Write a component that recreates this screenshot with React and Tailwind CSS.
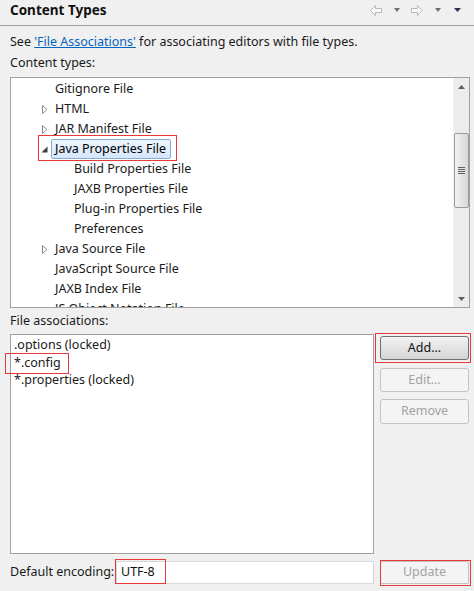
import React from "react";

const font = { fontFamily: '"Noto Sans", "Noto Sans CJK SC", sans-serif' };

function Collapsed() {
  return (
    <svg width="6" height="9" viewBox="0 0 6 9" className="block">
      <path d="M0.5 0.5 L5 4.5 L0.5 8.5 Z" fill="none" stroke="#8c8c8c" strokeWidth="1" />
    </svg>
  );
}

function Expanded() {
  return (
    <svg width="7" height="7" viewBox="0 0 7 7" className="block">
      <path d="M6.5 0.5 L6.5 6.5 L0.5 6.5 Z" fill="#3c3c3c" />
    </svg>
  );
}

function TreeRow({ level, state, children, selected }) {
  return (
    <div className="h-[20px] flex items-center whitespace-nowrap">
      <div className={level === 0 ? "w-[31px] shrink-0" : "w-[50px] shrink-0"} />
      <div className="w-[10px] shrink-0 flex items-center">
        {state === "c" && <Collapsed />}
        {state === "e" && <div className="-ml-[1px]"><Expanded /></div>}
      </div>
      {selected ? (
        <div className="ml-[-1px] h-[20px] pl-[3px] pr-[4px] flex items-center rounded-[2px] border border-[#84acdd] bg-gradient-to-b from-[#eef5fd] to-[#d5e7fb] text-[#000]">
          {children}
        </div>
      ) : (
        <div className="ml-[3px] text-[#1a1a1a]">{children}</div>
      )}
    </div>
  );
}

function BackArrow() {
  return (
    <svg width="12" height="11" viewBox="0 0 12 11" className="block">
      <path d="M0.5 5.5 L5.5 0.5 L5.5 3.5 L11.5 3.5 L11.5 7.5 L5.5 7.5 L5.5 10.5 Z" fill="#fafafa" stroke="#b8b8b8" strokeWidth="1" />
    </svg>
  );
}
function FwdArrow() {
  return (
    <svg width="12" height="11" viewBox="0 0 12 11" className="block">
      <path d="M11.5 5.5 L6.5 0.5 L6.5 3.5 L0.5 3.5 L0.5 7.5 L6.5 7.5 L6.5 10.5 Z" fill="#fafafa" stroke="#b8b8b8" strokeWidth="1" />
    </svg>
  );
}
function SmallDown({ color, w = 6 }) {
  return (
    <svg width={w} height="4" viewBox={`0 0 ${w} 4`} className="block">
      <path d={`M0 0 L${w} 0 L${w / 2} 4 Z`} fill={color} />
    </svg>
  );
}

export default function App() {
  return (
    <div className="relative w-[474px] h-[591px] bg-[#f0f0f0] text-[12.5px] text-[#1a1a1a] overflow-hidden" style={font}>
      {/* Header */}
      <div className="h-[26px] border-b border-[#a0a0a0] flex items-center justify-between pl-[10px] pr-[13px]">
        <div className="font-bold text-[13.5px] text-[#111] leading-none -mt-[3px]">Content Types</div>
        <div className="flex items-center -mt-[5px]">
          <BackArrow />
          <div className="ml-[12px]"><SmallDown color="#707070" /></div>
          <div className="ml-[11px]"><FwdArrow /></div>
          <div className="ml-[12px]"><SmallDown color="#707070" /></div>
          <div className="ml-[13px]"><SmallDown color="#3d2a5c" w={7} /></div>
        </div>
      </div>

      <div className="px-[10px]">
        <div className="mt-[8px] h-[16px] leading-[16px] whitespace-nowrap">
          See <span className="text-[#0563c1] underline">'File Associations'</span> for associating editors with file types.
        </div>
        <div className="mt-[5px] h-[16px] leading-[16px]">Content types:</div>

        {/* Tree */}
        <div className="mt-[6px] h-[231px] w-[460px] border border-[#a0a0a0] bg-white flex overflow-hidden">
          <div className="flex-1 overflow-hidden leading-[20px] pt-[1px]">
            <TreeRow level={0}>Gitignore File</TreeRow>
            <TreeRow level={0} state="c">HTML</TreeRow>
            <TreeRow level={0} state="c">JAR Manifest File</TreeRow>
            <TreeRow level={0} state="e" selected>Java Properties File</TreeRow>
            <TreeRow level={1}>Build Properties File</TreeRow>
            <TreeRow level={1}>JAXB Properties File</TreeRow>
            <TreeRow level={1}>Plug-in Properties File</TreeRow>
            <TreeRow level={1}>Preferences</TreeRow>
            <TreeRow level={0} state="c">Java Source File</TreeRow>
            <TreeRow level={0}>JavaScript Source File</TreeRow>
            <TreeRow level={0}>JAXB Index File</TreeRow>
            <TreeRow level={0}>JS Object Notation File</TreeRow>
          </div>
          {/* Scrollbar */}
          <div className="w-[16px] bg-[#ececec] flex flex-col items-center border-l border-[#f4f4f4]">
            <div className="h-[17px] flex items-center justify-center">
              <svg width="7" height="4" viewBox="0 0 7 4"><path d="M0 4 L7 4 L3.5 0 Z" fill="#606060" /></svg>
            </div>
            <div className="h-[38px]" />
            <div className="w-[15px] h-[75px] rounded-[2px] border border-[#9a9a9a] bg-gradient-to-r from-[#f2f2f2] to-[#d8d8d8] flex items-center justify-center">
              <div className="flex flex-col gap-[1px]">
                <div className="w-[7px] h-[1px] bg-[#606060]" />
                <div className="w-[7px] h-[1px] bg-[#606060]" />
                <div className="w-[7px] h-[1px] bg-[#606060]" />
                <div className="w-[7px] h-[1px] bg-[#606060]" />
              </div>
            </div>
            <div className="flex-1" />
            <div className="h-[17px] flex items-center justify-center">
              <svg width="7" height="4" viewBox="0 0 7 4"><path d="M0 0 L7 0 L3.5 4 Z" fill="#606060" /></svg>
            </div>
          </div>
        </div>

        <div className="mt-[5px] h-[16px] leading-[16px]">File associations:</div>

        {/* Lower grid */}
        <div className="mt-[5px] grid grid-cols-[364px_90px] gap-x-[6px] gap-y-[7px]">
          <div className="h-[220px] border border-[#a0a0a0] bg-white pl-[3px] leading-[17.5px]">
            <div className="h-[17.5px] pt-[1px]">.options (locked)</div>
            <div className="h-[17.5px] pt-[1px]">*.config</div>
            <div className="h-[17.5px] pt-[1px]">*.properties (locked)</div>
          </div>
          <div className="flex flex-col">
            <div className="mt-[2px] h-[24px] w-[89px] rounded-[3px] border border-[#707070] bg-gradient-to-b from-[#f2f2f2] to-[#d5d5d5] flex items-center justify-center text-[#111]">
              Add...
            </div>
            <div className="mt-[8px] h-[24px] w-[89px] rounded-[3px] border border-[#c3c3c3] bg-[#f4f4f4] flex items-center justify-center text-[#a2a2a2]">
              Edit...
            </div>
            <div className="mt-[7px] h-[25px] w-[89px] rounded-[3px] border border-[#c3c3c3] bg-[#f4f4f4] flex items-center justify-center text-[#a2a2a2]">
              Remove
            </div>
          </div>
          <div className="flex items-center h-[23px]">
            <div className="w-[106px] whitespace-nowrap">Default encoding:</div>
            <div className="flex-1 h-[23px] border border-[#d9d9d9] bg-white flex items-center pl-[4px] text-[#111]">UTF-8</div>
          </div>
          <div className="h-[23px] w-[89px] rounded-[2px] border border-[#c3c3c3] bg-[#f4f4f4] flex items-center justify-center text-[#a2a2a2]">
            Update
          </div>
        </div>
      </div>

      {/* Red annotation boxes */}
      <div className="absolute left-[38px] top-[135px] w-[139px] h-[26px] border border-[#e8393a]" />
      <div className="absolute left-[5px] top-[353px] w-[64px] h-[21px] border border-[#e8393a]" />
      <div className="absolute left-[375px] top-[333px] w-[96px] h-[30px] border border-[#e8393a]" />
      <div className="absolute left-[115px] top-[559px] w-[51px] h-[25px] border border-[#e8393a]" />
      <div className="absolute left-[380px] top-[560px] w-[91px] h-[26px] border border-[#e8393a]" />
    </div>
  );
}
